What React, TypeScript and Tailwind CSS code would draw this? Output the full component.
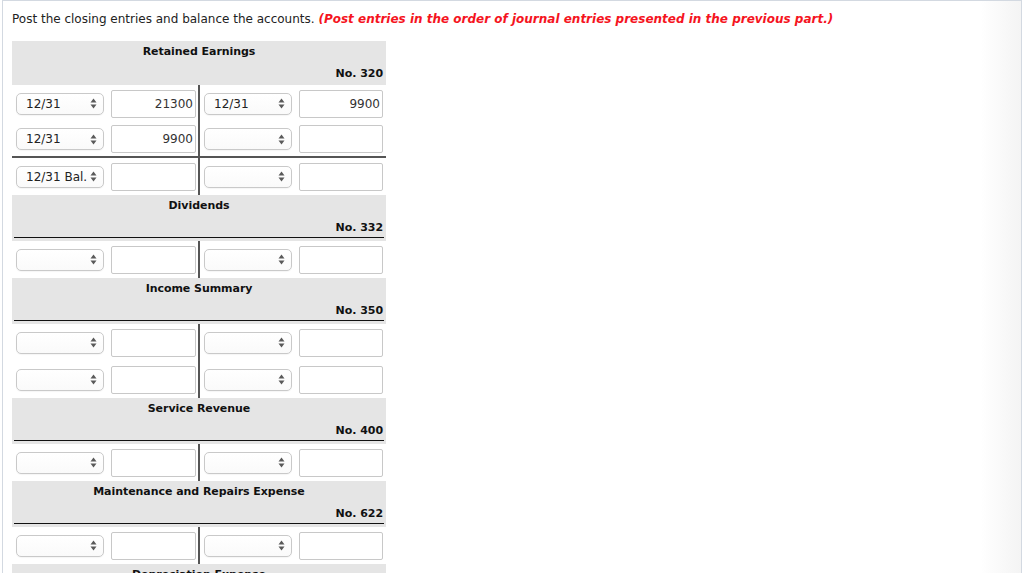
import React from 'react';

type Row = { ld?: string; la?: string; rd?: string; ra?: string };

interface Account {
  name: string;
  no: string;
  underline: boolean;
  rows: Row[];
  totalAfter?: number; // draw a ruled line after this row index
}

const accounts: Account[] = [
  {
    name: 'Retained Earnings',
    no: '320',
    underline: false,
    rows: [
      { ld: '12/31', la: '21300', rd: '12/31', ra: '9900' },
      { ld: '12/31', la: '9900' },
      { ld: '12/31 Bal.' },
    ],
    totalAfter: 1,
  },
  { name: 'Dividends', no: '332', underline: true, rows: [{}] },
  { name: 'Income Summary', no: '350', underline: true, rows: [{}, {}] },
  { name: 'Service Revenue', no: '400', underline: true, rows: [{}] },
  { name: 'Maintenance and Repairs Expense', no: '622', underline: true, rows: [{}] },
  { name: 'Depreciation Expense', no: '711', underline: true, rows: [{}] },
];

const Arrows = () => (
  <svg width="7" height="11" viewBox="0 0 7 11" className="shrink-0">
    <path d="M3.5 0.5 L6.5 4.5 L0.5 4.5 Z" fill="#5a5a5a" />
    <path d="M3.5 10.5 L6.5 6.5 L0.5 6.5 Z" fill="#5a5a5a" />
  </svg>
);

const Select = ({ value }: { value?: string }) => (
  <div className="flex items-center justify-between w-[88px] h-[22px] rounded-[5px] border border-[#c9c9c9] bg-gradient-to-b from-white to-[#fafafa] pl-[9px] pr-[6px] shadow-[0_1px_1px_rgba(0,0,0,0.04)]">
    <span className="text-[12px] text-[#222] whitespace-nowrap">{value ?? ''}</span>
    <Arrows />
  </div>
);

const Amount = ({ value, w }: { value?: string; w: string }) => (
  <div className={`${w} h-[28px] rounded-[2px] border border-[#c8c8c8] bg-white flex items-center justify-end pr-[2px]`}>
    <span className="text-[12px] text-[#333]">{value ?? ''}</span>
  </div>
);

const LedgerRow = ({ row, ruled }: { row: Row; ruled: boolean }) => (
  <div className={`flex ${ruled ? 'h-[36px] border-b-2 border-[#555]' : 'h-[37px]'}`}>
    <div className="flex items-center w-[186px] pl-[4px] gap-[7px]">
      <Select value={row.ld} />
      <Amount value={row.la} w="w-[85px]" />
    </div>
    <div className="w-[2px] bg-[#555]" />
    <div className="flex items-center w-[186px] pl-[4px] gap-[7px]">
      <Select value={row.rd} />
      <Amount value={row.ra} w="w-[84px]" />
    </div>
  </div>
);

const AccountBlock = ({ acct }: { acct: Account }) => (
  <div>
    <div className={`bg-[#e5e5e5] pt-[3px] ${acct.underline ? 'pb-[3px]' : 'pb-[2px]'}`}>
      <div className="text-center font-bold text-[11px] tracking-[-0.05px] leading-[16px] text-[#111]">{acct.name}</div>
      <div className={`mx-[2px] mt-[6px] pb-[1px] ${acct.underline ? 'border-b border-[#111]' : ''}`}>
        <div className="text-right font-bold text-[11px] tracking-[-0.05px] leading-[16px] text-[#111] pr-[1px]">No. {acct.no}</div>
      </div>
    </div>
    {acct.rows.map((r, i) => (
      <LedgerRow key={i} row={r} ruled={acct.totalAfter === i} />
    ))}
  </div>
);

export default function App() {
  return (
    <div className="h-[573px] overflow-hidden bg-white pl-[2px]" style={{ fontFamily: '"DejaVu Sans", Verdana, sans-serif' }}>
      <div className="w-[1020px] h-[600px] border-t border-l border-r border-[#d3d9e1] bg-gradient-to-r from-white from-[96%] to-[#f4f4f4]">
        <p className="pl-[9px] pt-[11px] text-[12px] leading-[14px] text-[#222]">
          Post the closing entries and balance the accounts.{' '}
          <span className="font-bold italic text-[#f5141e]">
            (Post entries in the order of journal entries presented in the previous part.)
          </span>
        </p>
        <div className="ml-[9px] mt-[15px] w-[374px]">
          {accounts.map((a) => (
            <AccountBlock key={a.no} acct={a} />
          ))}
        </div>
      </div>
    </div>
  );
}
